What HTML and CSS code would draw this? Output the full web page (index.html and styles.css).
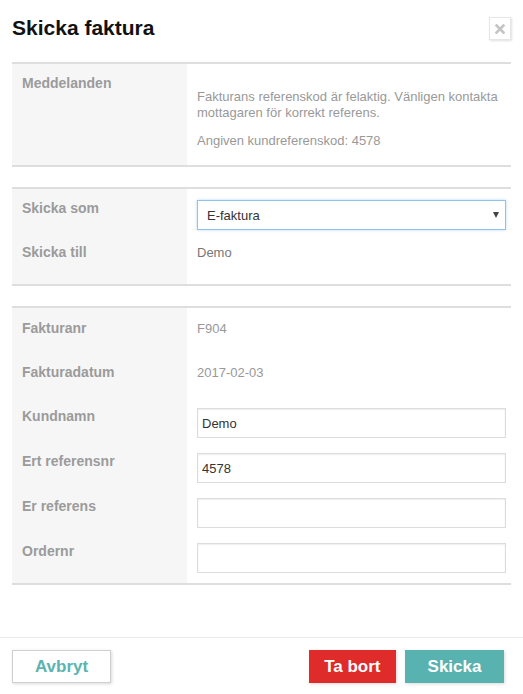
FILE: index.html
```html
<!DOCTYPE html>
<html lang="sv">

<head>
    <meta charset="UTF-8">
    <meta name="viewport" content="width=device-width, initial-scale=1.0">
    <title>Skicka faktura</title>
    <link rel="stylesheet" href="styles.css">
</head>

<body>
    <div class="modal">
        <header class="modal-header">
            <h1>Skicka faktura</h1>
            <button class="close-btn" type="button" aria-label="Stäng">
                <svg width="10" height="10" viewBox="0 0 10 10">
                    <path d="M1.5 1.5 L8.5 8.5 M8.5 1.5 L1.5 8.5" stroke="#c4c4c4" stroke-width="2.6" stroke-linecap="square" fill="none" />
                </svg>
            </button>
        </header>

        <div class="modal-body">
            <!-- Messages from the receiver -->
            <section class="panel">
                <div class="row">
                    <div class="label">Meddelanden</div>
                    <div class="value message">
                        <p>Fakturans referenskod är felaktig. Vänligen kontakta mottagaren för korrekt referens.</p>
                        <p>Angiven kundreferenskod: 4578</p>
                    </div>
                </div>
            </section>

            <!-- Delivery -->
            <section class="panel panel-delivery">
                <div class="row">
                    <div class="label">Skicka som</div>
                    <div class="value">
                        <div class="select-wrap">
                            <select class="field select">
                                <option>E-faktura</option>
                                <option>E-post</option>
                                <option>Brev</option>
                            </select>
                        </div>
                    </div>
                </div>
                <div class="row">
                    <div class="label">Skicka till</div>
                    <div class="value recipient">Demo</div>
                </div>
            </section>

            <!-- Invoice details -->
            <section class="panel panel-details">
                <div class="row">
                    <div class="label">Fakturanr</div>
                    <div class="value">F904</div>
                </div>
                <div class="row">
                    <div class="label">Fakturadatum</div>
                    <div class="value">2017-02-03</div>
                </div>
                <div class="row">
                    <div class="label">Kundnamn</div>
                    <div class="value"><input class="field" type="text" value="Demo"></div>
                </div>
                <div class="row">
                    <div class="label">Ert referensnr</div>
                    <div class="value"><input class="field" type="text" value="4578"></div>
                </div>
                <div class="row">
                    <div class="label">Er referens</div>
                    <div class="value"><input class="field" type="text"></div>
                </div>
                <div class="row">
                    <div class="label">Ordernr</div>
                    <div class="value"><input class="field" type="text"></div>
                </div>
            </section>
        </div>

        <footer class="modal-footer">
            <button class="btn btn-default" type="button">Avbryt</button>
            <div class="actions">
                <button class="btn btn-danger" type="button">Ta bort</button>
                <button class="btn btn-primary" type="button">Skicka</button>
            </div>
        </footer>
    </div>
</body>

</html>
```

FILE: styles.css
```css
* {
    margin: 0;
    padding: 0;
    box-sizing: border-box;
}

body {
    font-family: "Liberation Sans", Arial, sans-serif;
    background: #fff;
    color: #333;
}

.modal {
    width: 523px;
    min-height: 694px;
    display: flex;
    flex-direction: column;
}

/* Header */

.modal-header {
    display: flex;
    justify-content: space-between;
    align-items: flex-start;
    padding: 16px 12px 22px;
}

.modal-header h1 {
    font-size: 21px;
    line-height: 24px;
    font-weight: bold;
    color: #111;
}

.close-btn {
    width: 22px;
    height: 23px;
    margin-top: 1px;
    display: flex;
    justify-content: center;
    align-items: center;
    background: #fff;
    border: 1px solid #e6e6e6;
    box-shadow: 1px 1px 2px rgba(0, 0, 0, 0.12);
    cursor: pointer;
}

/* Body */

.modal-body {
    flex: 1;
    padding: 0 12px 52px;
    display: flex;
    flex-direction: column;
    gap: 20px;
}

.panel {
    display: flex;
    flex-direction: column;
    gap: 15px;
    padding: 11px 0;
    border-top: 2px solid #dedede;
    border-bottom: 2px solid #dedede;
    background: linear-gradient(to right, #f6f6f6 175px, #fff 175px);
}

.panel-delivery {
    gap: 14px;
}

.panel-details {
    padding-top: 12px;
    padding-bottom: 10px;
}

.row {
    display: grid;
    grid-template-columns: 175px 1fr;
    min-height: 29px;
}

.label {
    padding-left: 10px;
    font-size: 14px;
    line-height: 17px;
    font-weight: bold;
    color: #9b9b9b;
}

.value {
    padding: 0 5px 0 10px;
    font-size: 13px;
    line-height: 17px;
    color: #999;
}

.value.recipient {
    color: #777;
}

.message p {
    line-height: 16px;
    margin-top: 12px;
}

.message p:first-child {
    margin-top: 14px;
}

.message p:last-child {
    margin-bottom: 5px;
}

/* Form fields */

.field {
    display: block;
    width: 100%;
    height: 30px;
    padding: 0 4px;
    font-family: inherit;
    font-size: 13px;
    color: #333;
    background: #fff;
    border: 1px solid #dcdcdc;
    border-radius: 0;
    box-shadow: inset 0 1px 2px rgba(0, 0, 0, 0.07);
    outline: none;
}

.select-wrap {
    position: relative;
}

.select-wrap::after {
    content: "";
    position: absolute;
    right: 7px;
    top: 12px;
    border-left: 3.5px solid transparent;
    border-right: 3.5px solid transparent;
    border-top: 6px solid #444;
    pointer-events: none;
}

.select {
    appearance: none;
    -webkit-appearance: none;
    padding-left: 9px;
    border-color: #8fc3ea;
    box-shadow: 0 0 3px rgba(102, 175, 233, 0.45);
}

/* Footer */

.modal-footer {
    display: flex;
    justify-content: space-between;
    align-items: center;
    padding: 12px 19px 11px 12px;
    border-top: 1px solid #ebebeb;
}

.actions {
    display: flex;
    gap: 9px;
}

.btn {
    height: 33px;
    min-width: 99px;
    padding: 0 14px;
    font-family: inherit;
    font-size: 17px;
    font-weight: bold;
    border: none;
    border-radius: 0;
    cursor: pointer;
    box-shadow: 1px 1px 3px rgba(0, 0, 0, 0.15);
}

.btn-default {
    background: #fff;
    color: #5ab4b1;
    border: 1px solid #cfcfcf;
}

.btn-danger {
    min-width: 0;
    padding: 0 15.5px;
    background: #e02b2b;
    color: #fff;
}

.btn-primary {
    background: #58b2af;
    color: #fff;
}
```
